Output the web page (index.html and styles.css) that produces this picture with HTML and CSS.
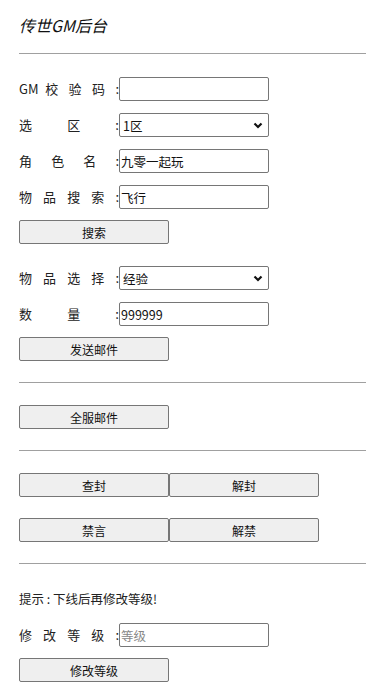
FILE: index.html
```html
<!DOCTYPE html>
<html lang="zh-CN">

<head>
    <meta charset="UTF-8">
    <meta name="viewport" content="width=device-width, initial-scale=1.0">
    <title>传世GM后台</title>
    <link rel="stylesheet" href="styles.css">
</head>

<body>
    <div class="page">
        <h1 class="title">传世GM后台</h1>
        <hr class="line first-line">

        <!-- 发送邮件 -->
        <div class="section">
            <div class="row">
                <label class="label">GM 校 验 码 :</label>
                <input class="field" type="text">
            </div>
            <div class="row">
                <label class="label">选 区 :</label>
                <div class="select-box">
                    <select class="field">
                        <option>1区</option>
                        <option>2区</option>
                    </select>
                    <svg class="arrow" width="10" height="7" viewBox="0 0 10 7">
                        <path d="M1.5 1.5 L5 5 L8.5 1.5" fill="none" stroke="#111" stroke-width="2.2"/>
                    </svg>
                </div>
            </div>
            <div class="row">
                <label class="label">角 色 名 :</label>
                <input class="field" type="text" value="九零一起玩">
            </div>
            <div class="row">
                <label class="label">物 品 搜 索 :</label>
                <input class="field" type="text" value="飞行">
            </div>
            <div class="actions">
                <button class="btn">搜索</button>
            </div>
        </div>

        <div class="section">
            <div class="row">
                <label class="label">物 品 选 择 :</label>
                <div class="select-box">
                    <select class="field">
                        <option>经验</option>
                    </select>
                    <svg class="arrow" width="10" height="7" viewBox="0 0 10 7">
                        <path d="M1.5 1.5 L5 5 L8.5 1.5" fill="none" stroke="#111" stroke-width="2.2"/>
                    </svg>
                </div>
            </div>
            <div class="row">
                <label class="label">数 量 :</label>
                <input class="field" type="text" value="999999">
            </div>
            <div class="actions">
                <button class="btn">发送邮件</button>
            </div>
        </div>

        <hr class="line">
        <div class="section">
            <div class="actions first">
                <button class="btn">全服邮件</button>
            </div>
        </div>

        <hr class="line">
        <div class="section">
            <div class="actions first">
                <button class="btn">查封</button><button class="btn">解封</button>
            </div>
            <div class="actions pair">
                <button class="btn">禁言</button><button class="btn">解禁</button>
            </div>
        </div>

        <hr class="line">
        <div class="section">
            <p class="tip">提示 : 下线后再修改等级!</p>
            <div class="row">
                <label class="label">修 改 等 级 :</label>
                <input class="field" type="text" placeholder="等级">
            </div>
            <div class="actions">
                <button class="btn">修改等级</button>
            </div>
        </div>
    </div>
</body>

</html>
```

FILE: styles.css
```css
* {
    margin: 0;
    padding: 0;
    box-sizing: border-box;
}

body {
    font-family: "Noto Sans CJK SC", "Noto Sans", sans-serif;
    font-size: 13px;
    color: #222;
    background: #fff;
}

.page {
    padding-left: 19px;
}

.title {
    font-size: 16px;
    font-weight: normal;
    font-style: italic;
    line-height: 20px;
    padding-top: 15px;
    color: #111;
}

.line {
    border: none;
    border-top: 1px solid #a0a0a0;
    height: 0;
    margin-top: 18px;
}

.section + .line {
    margin-top: 21px;
}

.section {
    padding-top: 22px;
}

.section:nth-of-type(1) {
    padding-top: 23px;
}

.row {
    display: flex;
    align-items: center;
    height: 24px;
    margin-top: 12px;
}

.section > .row:first-child {
    margin-top: 0;
}

.label {
    width: 100px;
    text-align: justify;
    text-align-last: justify;
    line-height: 24px;
    color: #222;
}

.field {
    width: 150px;
    height: 24px;
    border: 1px solid #767676;
    border-radius: 2px;
    font-family: inherit;
    font-size: 12.5px;
    padding: 0 1px;
    background: #fff;
    color: #111;
}

.field::placeholder {
    color: #888;
}

.select-box {
    position: relative;
    width: 150px;
    height: 24px;
}

.select-box select {
    -webkit-appearance: none;
    appearance: none;
    padding-left: 3px;
    outline: none;
}

.select-box .arrow {
    position: absolute;
    right: 6px;
    top: 9px;
    pointer-events: none;
}

.actions {
    display: flex;
    margin-top: 11px;
}

.actions.first {
    margin-top: 0;
}

.actions.pair {
    margin-top: 21px;
}

.btn {
    width: 150px;
    height: 24px;
    border: 1px solid #767676;
    border-radius: 2px;
    background: #efefef;
    font-family: inherit;
    font-size: 12px;
    color: #111;
}

.tip {
    font-size: 12.5px;
    line-height: 24px;
    margin-top: 1px;
}
```
